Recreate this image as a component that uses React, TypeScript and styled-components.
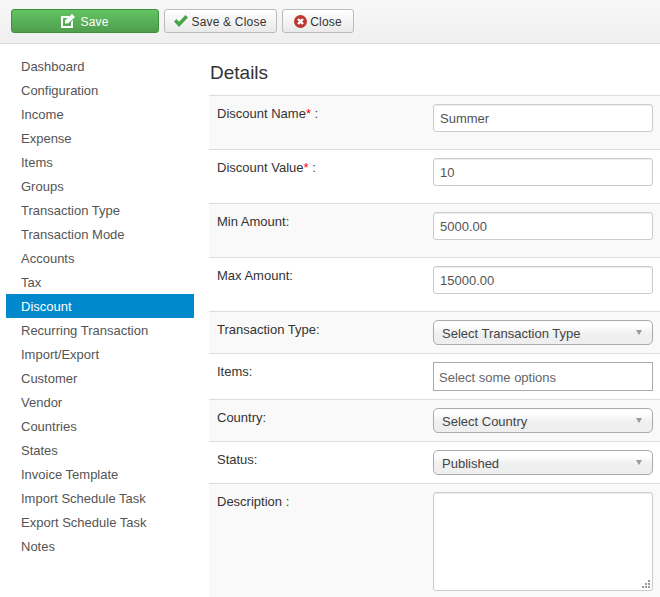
import React from "react"
import styled, { createGlobalStyle } from "styled-components"

const GlobalStyle = createGlobalStyle`
  html, body {
    margin: 0;
    padding: 0;
    background: #fff;
    overflow: hidden;
  }
  body {
    font-family: "Liberation Sans", Arial, sans-serif;
    font-size: 13px;
    color: #333;
  }
  * {
    box-sizing: border-box;
  }
`

const menuItems = [
  "Dashboard",
  "Configuration",
  "Income",
  "Expense",
  "Items",
  "Groups",
  "Transaction Type",
  "Transaction Mode",
  "Accounts",
  "Tax",
  "Discount",
  "Recurring Transaction",
  "Import/Export",
  "Customer",
  "Vendor",
  "Countries",
  "States",
  "Invoice Template",
  "Import Schedule Task",
  "Export Schedule Task",
  "Notes",
]

const EditIcon = () => (
  <svg width="14" height="14" viewBox="0 0 14 14">
    <path
      fill="#fff"
      fillRule="evenodd"
      d="M0 2h9L7 4H2v8h8V8l2-2v8H0z"
    />
    <path fill="#fff" d="M11 0l3 3-7 6.5H4V6.5z" />
  </svg>
)

const CheckIcon = () => (
  <svg width="14" height="12" viewBox="0 0 14 12">
    <path fill="#46a546" d="M0 6.5L2.3 4l2.7 2.8L11.5 0 14 2.5 5 12z" />
  </svg>
)

const CloseIcon = () => (
  <svg width="13" height="13" viewBox="0 0 13 13">
    <circle cx="6.5" cy="6.5" r="6.5" fill="#bd362f" />
    <path stroke="#fff" strokeWidth="2.4" d="M4 4l5 5M9 4l-5 5" />
  </svg>
)

const ResizeGrip = () => (
  <svg width="8" height="8" viewBox="0 0 8 8">
    <path
      fill="#999"
      d="M6 0h2v2H6zM3 3h2v2H3zM6 3h2v2H6zM0 6h2v2H0zM3 6h2v2H3zM6 6h2v2H6z"
    />
  </svg>
)

export default function App() {
  return (
    <Page>
      <GlobalStyle />
      <Toolbar>
        <SaveButton $width={148}>
          <EditIcon />
          <ButtonText>Save</ButtonText>
        </SaveButton>
        <ToolButton $width={113}>
          <CheckIcon />
          <ButtonText>Save &amp; Close</ButtonText>
        </ToolButton>
        <ToolButton $width={72}>
          <CloseIcon />
          <ButtonText>Close</ButtonText>
        </ToolButton>
      </Toolbar>

      <Body>
        <Sidebar>
          {menuItems.map((item) => (
            <MenuItem key={item} $active={item === "Discount"}>
              {item}
            </MenuItem>
          ))}
        </Sidebar>

        <Main>
          <Heading>Details</Heading>
          <Row $height={54} $shaded>
            <Label>
              Discount Name<Star>*</Star> :
            </Label>
            <TextInput defaultValue="Summer" />
          </Row>
          <Row $height={54}>
            <Label>
              Discount Value<Star>*</Star> :
            </Label>
            <TextInput defaultValue="10" />
          </Row>
          <Row $height={54} $shaded>
            <Label>Min Amount:</Label>
            <TextInput defaultValue="5000.00" />
          </Row>
          <Row $height={54}>
            <Label>Max Amount:</Label>
            <TextInput defaultValue="15000.00" />
          </Row>
          <Row $height={42} $shaded>
            <Label>Transaction Type:</Label>
            <SelectBox>
              Select Transaction Type
              <Caret />
            </SelectBox>
          </Row>
          <Row $height={46}>
            <Label>Items:</Label>
            <ChosenBox>Select some options</ChosenBox>
          </Row>
          <Row $height={42} $shaded>
            <Label>Country:</Label>
            <SelectBox>
              Select Country
              <Caret />
            </SelectBox>
          </Row>
          <Row $height={42}>
            <Label>Status:</Label>
            <SelectBox>
              Published
              <Caret />
            </SelectBox>
          </Row>
          <Row $height={120} $shaded>
            <Label>Description :</Label>
            <TextAreaWrap>
              <TextArea />
              <Grip>
                <ResizeGrip />
              </Grip>
            </TextAreaWrap>
          </Row>
        </Main>
      </Body>
    </Page>
  )
}

const Page = styled.div`
  width: 660px;
  height: 597px;
  overflow: hidden;
`

const Toolbar = styled.div`
  display: flex;
  gap: 5px;
  height: 44px;
  padding: 9px 0 0 11px;
  background: linear-gradient(#f8f8f8, #efefef);
  border-bottom: 1px solid #d9d9d9;
`

const ToolButton = styled.button<{ $width: number }>`
  display: flex;
  align-items: center;
  justify-content: center;
  gap: 3px;
  width: ${(p) => p.$width}px;
  height: 24px;
  padding: 0;
  font: 12px "Liberation Sans", Arial, sans-serif;
  letter-spacing: 0.2px;
  color: #333;
  background: linear-gradient(#fff, #e9e9e9);
  border: 1px solid #bbb;
  border-radius: 3px;
`

const SaveButton = styled(ToolButton)`
  gap: 5px;
  color: #fff;
  background: linear-gradient(#62c462, #4f9f4f);
  border-color: #3f8f3f;
`

const ButtonText = styled.span`
  padding-top: 2px;
`

const Body = styled.div`
  display: flex;
  padding: 10px 0 0 6px;
`

const Sidebar = styled.nav`
  width: 188px;
  margin-right: 15px;
`

const MenuItem = styled.div<{ $active?: boolean }>`
  height: 24px;
  line-height: 26px;
  padding-left: 15px;
  color: ${(p) => (p.$active ? "#fff" : "#555")};
  background: ${(p) => (p.$active ? "#0088cc" : "transparent")};
`

const Main = styled.main`
  flex: 1;
`

const Heading = styled.h3`
  margin: 0;
  height: 41px;
  padding-top: 7px;
  padding-left: 1px;
  font-size: 19px;
  font-weight: 400;
  line-height: 24px;
  color: #333;
`

const Row = styled.div<{ $height: number; $shaded?: boolean }>`
  display: flex;
  justify-content: space-between;
  height: ${(p) => p.$height}px;
  padding: 8px 7px 0 8px;
  background: ${(p) => (p.$shaded ? "#f9f9f9" : "#fff")};
  border-top: 1px solid #ddd;
`

const Label = styled.label`
  line-height: 20px;
  color: #333;
`

const Star = styled.span`
  color: #f00;
`

const TextInput = styled.input`
  width: 220px;
  height: 28px;
  padding: 0 6px;
  font: 13px "Liberation Sans", Arial, sans-serif;
  color: #555;
  background: #fff;
  border: 1px solid #ccc;
  border-radius: 3px;
  box-shadow: inset 0 1px 1px rgba(0, 0, 0, 0.075);
  outline: none;
`

const SelectBox = styled.div`
  display: flex;
  justify-content: space-between;
  width: 220px;
  height: 25px;
  padding: 0 10px 0 8px;
  line-height: 26px;
  color: #444;
  background: linear-gradient(#fff 20%, #f0f0f0 55%, #eee);
  border: 1px solid #aaa;
  border-radius: 5px;
`

const Caret = styled.span`
  align-self: flex-start;
  margin-top: 9px;
  border-top: 5px solid #999;
  border-left: 3.5px solid transparent;
  border-right: 3.5px solid transparent;
`

const ChosenBox = styled.div`
  width: 220px;
  height: 29px;
  padding-left: 5px;
  line-height: 30px;
  color: #666;
  background: #fff;
  border: 1px solid #aaa;
`

const TextAreaWrap = styled.div`
  position: relative;
  width: 220px;
  height: 99px;
`

const TextArea = styled.textarea`
  display: block;
  width: 100%;
  height: 100%;
  resize: none;
  background: #fff;
  border: 1px solid #ccc;
  border-radius: 3px;
  box-shadow: inset 0 1px 1px rgba(0, 0, 0, 0.075);
  outline: none;
`

const Grip = styled.span`
  position: absolute;
  right: 3px;
  bottom: 3px;
  display: flex;
  pointer-events: none;
`
